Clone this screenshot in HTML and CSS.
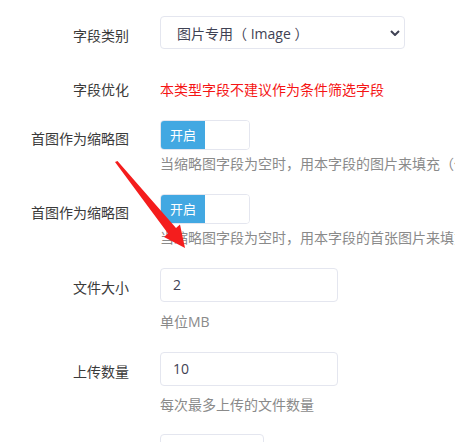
FILE: index.html
```html
<!DOCTYPE html>
<html lang="zh-CN">
<head>
<meta charset="utf-8">
<title>字段设置</title>
<link rel="stylesheet" href="styles.css">
</head>
<body>
<form class="form">
  <div class="group">
    <label class="label">字段类别</label>
    <div class="control">
      <div class="select">
        <span>图片专用（ Image ）</span>
        <svg class="caret" width="10" height="6" viewBox="0 0 10 6"><path d="M1 1 L5 5 L9 1" fill="none" stroke="#3f4254" stroke-width="2"/></svg>
      </div>
    </div>
  </div>

  <div class="group static">
    <label class="label">字段优化</label>
    <div class="control">
      <p class="warn">本类型字段不建议作为条件筛选字段</p>
    </div>
  </div>

  <div class="group">
    <label class="label label-switch">首图作为缩略图</label>
    <div class="control">
      <div class="switch"><span class="on">开启</span><span class="off"></span></div>
      <p class="help help-switch">当缩略图字段为空时，用本字段的图片来填充（仅限图片字段）</p>
    </div>
  </div>

  <div class="group">
    <label class="label label-switch">首图作为缩略图</label>
    <div class="control">
      <div class="switch"><span class="on">开启</span><span class="off"></span></div>
      <p class="help help-switch">当缩略图字段为空时，用本字段的首张图片来填充</p>
    </div>
  </div>

  <div class="group">
    <label class="label">文件大小</label>
    <div class="control">
      <div class="input">2</div>
      <p class="help">单位MB</p>
    </div>
  </div>

  <div class="group">
    <label class="label">上传数量</label>
    <div class="control">
      <div class="input">10</div>
      <p class="help help-tight">每次最多上传的文件数量</p>
    </div>
  </div>

  <div class="group">
    <label class="label"></label>
    <div class="control">
      <div class="input input-sm"></div>
    </div>
  </div>
</form>

<svg class="arrow" width="455" height="442" viewBox="0 0 455 442">
  <polygon points="115,162 117.5,161 176,228 180,224.5 185,248 164,237 168,233.5" fill="#f41d1d"/>
</svg>
</body>
</html>
```

FILE: styles.css
```css
html, body {
  margin: 0;
  padding: 0;
  overflow: hidden;
  background: #fff;
}

body {
  width: 455px;
  height: 442px;
  position: relative;
  font-family: "Open Sans", "Noto Sans CJK SC", sans-serif;
  font-size: 14px;
  line-height: 20px;
  color: #333;
}

.form {
  padding-top: 16px;
}

.group {
  display: flex;
  align-items: flex-start;
  margin-bottom: 20px;
}

.group.static {
  margin-top: 31px;
  margin-bottom: 20px;
}

.label {
  flex: 0 0 129px;
  margin-right: 31px;
  text-align: right;
  padding-top: 10px;
  color: #3a3a3a;
  white-space: nowrap;
}

.label-switch {
  padding-top: 9px;
}

.static .label {
  padding-top: 0;
}

.control {
  flex: 1;
  min-width: 0;
  white-space: nowrap;
}

.select {
  width: 245px;
  height: 33px;
  box-sizing: border-box;
  border: 1px solid #e4e6ef;
  border-radius: 4px;
  display: flex;
  align-items: center;
  justify-content: space-between;
  padding: 3px 4px 0 16px;
  color: #3f4254;
}

.caret {
  display: block;
  margin-top: -3px;
}

.warn {
  margin: 0;
  color: #f51515;
}

.switch {
  display: flex;
  width: 90px;
  height: 30px;
  box-sizing: border-box;
  border: 1px solid #e4e6ef;
  border-radius: 4px;
  overflow: hidden;
}

.switch .on {
  width: 44px;
  background: #42a8e2;
  color: #fff;
  font-size: 13px;
  line-height: 28px;
  text-align: center;
}

.switch .off {
  flex: 1;
  background: #fff;
}

.input {
  width: 178px;
  height: 34px;
  box-sizing: border-box;
  border: 1px solid #e4e6ef;
  border-radius: 4px;
  padding: 6px 12px;
  line-height: 20px;
  color: #3f4254;
}

.input-sm {
  width: 104px;
}

.help {
  margin: 10px 0 0;
  color: #8a8a8a;
}

.help-switch {
  margin-top: 4px;
}

.help-tight {
  margin-top: 9px;
  margin-bottom: -1px;
}

.arrow {
  position: absolute;
  left: 0;
  top: 0;
  pointer-events: none;
}
```
